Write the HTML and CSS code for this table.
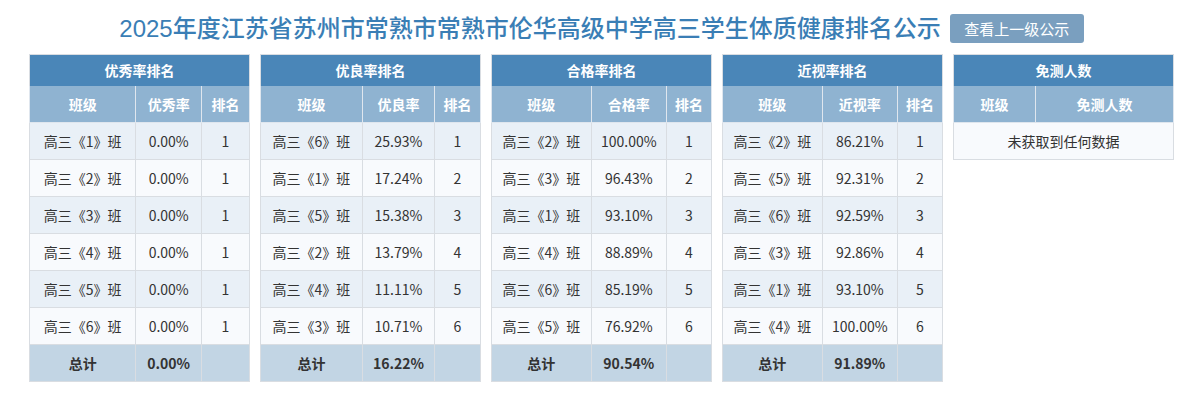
FILE: index.html
```html
<!DOCTYPE html>
<html lang="zh-CN">
<head>
<meta charset="utf-8">
<title>体质健康排名公示</title>
<link rel="stylesheet" href="styles.css">
</head>
<body>
<div class="page">
  <div class="header">
    <h1 class="title">2025年度江苏省苏州市常熟市常熟市伦华高级中学高三学生体质健康排名公示</h1>
    <button class="btn">查看上一级公示</button>
  </div>
  <div class="tables">
    <table class="rank">
      <thead>
        <tr><th class="cap" colspan="3">优秀率排名</th></tr>
        <tr class="sub"><th>班级</th><th>优秀率</th><th>排名</th></tr>
      </thead>
      <tbody>
        <tr><td>高三《1》班</td><td>0.00%</td><td>1</td></tr>
        <tr><td>高三《2》班</td><td>0.00%</td><td>1</td></tr>
        <tr><td>高三《3》班</td><td>0.00%</td><td>1</td></tr>
        <tr><td>高三《4》班</td><td>0.00%</td><td>1</td></tr>
        <tr><td>高三《5》班</td><td>0.00%</td><td>1</td></tr>
        <tr><td>高三《6》班</td><td>0.00%</td><td>1</td></tr>
        <tr class="total"><td>总计</td><td>0.00%</td><td></td></tr>
      </tbody>
    </table>
    <table class="rank">
      <thead>
        <tr><th class="cap" colspan="3">优良率排名</th></tr>
        <tr class="sub"><th>班级</th><th>优良率</th><th>排名</th></tr>
      </thead>
      <tbody>
        <tr><td>高三《6》班</td><td>25.93%</td><td>1</td></tr>
        <tr><td>高三《1》班</td><td>17.24%</td><td>2</td></tr>
        <tr><td>高三《5》班</td><td>15.38%</td><td>3</td></tr>
        <tr><td>高三《2》班</td><td>13.79%</td><td>4</td></tr>
        <tr><td>高三《4》班</td><td>11.11%</td><td>5</td></tr>
        <tr><td>高三《3》班</td><td>10.71%</td><td>6</td></tr>
        <tr class="total"><td>总计</td><td>16.22%</td><td></td></tr>
      </tbody>
    </table>
    <table class="rank">
      <thead>
        <tr><th class="cap" colspan="3">合格率排名</th></tr>
        <tr class="sub"><th>班级</th><th>合格率</th><th>排名</th></tr>
      </thead>
      <tbody>
        <tr><td>高三《2》班</td><td>100.00%</td><td>1</td></tr>
        <tr><td>高三《3》班</td><td>96.43%</td><td>2</td></tr>
        <tr><td>高三《1》班</td><td>93.10%</td><td>3</td></tr>
        <tr><td>高三《4》班</td><td>88.89%</td><td>4</td></tr>
        <tr><td>高三《6》班</td><td>85.19%</td><td>5</td></tr>
        <tr><td>高三《5》班</td><td>76.92%</td><td>6</td></tr>
        <tr class="total"><td>总计</td><td>90.54%</td><td></td></tr>
      </tbody>
    </table>
    <table class="rank">
      <thead>
        <tr><th class="cap" colspan="3">近视率排名</th></tr>
        <tr class="sub"><th>班级</th><th>近视率</th><th>排名</th></tr>
      </thead>
      <tbody>
        <tr><td>高三《2》班</td><td>86.21%</td><td>1</td></tr>
        <tr><td>高三《5》班</td><td>92.31%</td><td>2</td></tr>
        <tr><td>高三《6》班</td><td>92.59%</td><td>3</td></tr>
        <tr><td>高三《3》班</td><td>92.86%</td><td>4</td></tr>
        <tr><td>高三《1》班</td><td>93.10%</td><td>5</td></tr>
        <tr><td>高三《4》班</td><td>100.00%</td><td>6</td></tr>
        <tr class="total"><td>总计</td><td>91.89%</td><td></td></tr>
      </tbody>
    </table>
    <table class="rank">
      <thead>
        <tr><th class="cap" colspan="2">免测人数</th></tr>
        <tr class="sub"><th>班级</th><th>免测人数</th></tr>
      </thead>
      <tbody>
        <tr class="empty"><td colspan="2">未获取到任何数据</td></tr>
      </tbody>
    </table>
  </div>
</div>
</body>
</html>
```
FILE: styles.css
```css
* { box-sizing: border-box; }
body {
  margin: 0;
  background: #fff;
  font-family: "Noto Sans CJK SC", "Noto Sans", sans-serif;
  color: #333;
}
.page {
  padding: 14px 0 0 4px;
}
.header {
  display: flex;
  justify-content: center;
  align-items: center;
  gap: 9px;
  height: 29px;
}
.title {
  margin: 0;
  font-family: "Liberation Sans", "Noto Sans CJK SC", sans-serif;
  font-size: 24px;
  font-weight: 500;
  color: #3a7eb5;
  line-height: 29px;
  white-space: nowrap;
}
.btn {
  height: 29px;
  width: 134px;
  padding: 0;
  border: none;
  border-radius: 3px;
  background: #7a9fbf;
  color: #fff;
  font-family: inherit;
  font-size: 15px;
}
.tables {
  display: flex;
  justify-content: center;
  align-items: flex-start;
  gap: 10px;
  margin-top: 11px;
}
.rank {
  width: 221px;
  border-collapse: collapse;
  border: 1px solid #d9dde2;
  font-size: 14px;
  text-align: center;
}
.rank th, .rank td {
  padding: 0 6px;
  white-space: nowrap;
}
.rank .cap {
  height: 31px;
  background: #4a86b8;
  color: #fff;
  font-weight: 700;
}
.rank .sub th {
  height: 37px;
  background: #8fb3d1;
  color: #fff;
  font-weight: 700;
  border: 1px solid #dfe6ee;
  border-top: none;
}
.rank td {
  height: 37px;
  border: 1px solid #d9dde2;
}
.rank tbody tr:nth-child(odd) td { background: #e9f0f7; }
.rank tbody tr:nth-child(even) td { background: #f8fafd; }
.rank tbody tr.total td {
  background: #c2d5e4;
  font-weight: 700;
}
.rank tbody tr.empty td { background: #f8fafd; }
```
